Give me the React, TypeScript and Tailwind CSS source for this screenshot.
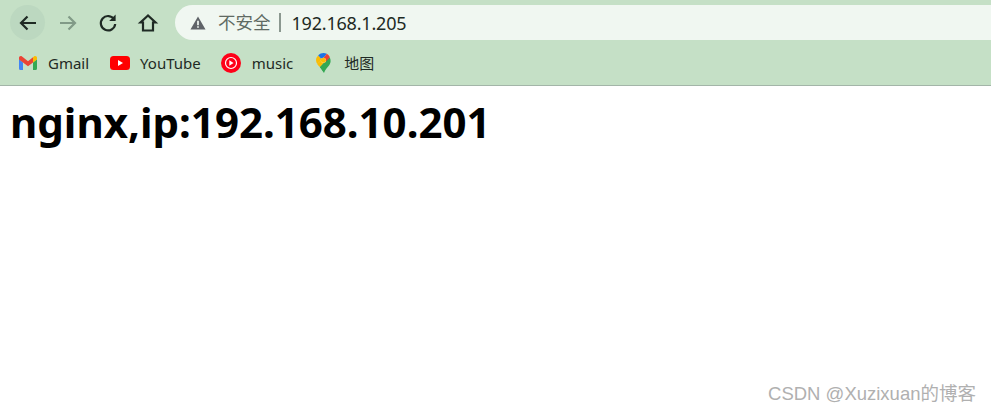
import React from "react";

const Nav = ({ d, color = "#1f2a24", bg = false }: { d: React.ReactNode; color?: string; bg?: boolean }) => (
  <div className={`flex h-[35px] w-[35px] shrink-0 items-center justify-center rounded-full ${bg ? "bg-[#bcd8c0]" : ""}`}>
    <svg width="24" height="24" viewBox="0 0 24 24" fill="none" stroke={color} strokeWidth="2.200">{d}</svg>
  </div>
);

export default function App() {
  return (
    <div className="relative h-[413px] w-[991px] overflow-hidden bg-white font-['Noto_Sans','Noto_Sans_CJK_SC',sans-serif]">
      <div className="flex h-[86px] flex-col border-b border-[#a3b5a8] bg-[#c5e0c6]">
        <div className="flex h-[45px] items-start pt-[5px] pl-[10px]">
          <div className="flex gap-[5px]">
            <Nav bg d={<path d="M20 12H5M11.500 5.500 5 12l6.500 6.500" />} />
            <Nav color="#819a87" d={<path d="M4 12h15M12.500 5.500 19 12l-6.500 6.500" />} />
            <Nav d={<><path d="M18.200 8.500A7.200 7.200 0 1 0 19.200 13" /><path d="M19.600 3.500v6.400h-6.400z" fill="#1f2a24" stroke="none" /></>} />
            <Nav d={<path d="M12 4.500 4.500 11.500H7V19.500H17V11.500H19.500Z" strokeLinejoin="miter" />} />
          </div>
          <div className="ml-[10px] flex h-[35px] flex-1 items-center rounded-l-full bg-[#f0f7f1] pl-[15px]">
            <svg width="16" height="14" viewBox="0 0 14 13" className="shrink-0">
              <path fillRule="evenodd" d="M7 0.500 14 12.500H0ZM6.200 4.500V8.500H7.800V4.500ZM6.200 9.500V11H7.800V9.500Z" fill="#5f6368" />
            </svg>
            <span className="ml-[12px] text-[17.500px] leading-none text-[#5f6a63]">不安全</span>
            <span className="ml-[8px] h-[19px] w-[2px] bg-[#8b9890]" />
            <span className="ml-[11px] text-[18px] leading-none tracking-[-0.2px] text-[#1e2a24] font-['Noto_Sans',sans-serif]">192.168.1.205</span>
          </div>
        </div>
        <div className="flex flex-1 items-center pb-[4px] text-[15px] leading-none text-[#1f2a24]">
          <div className="ml-[19px] flex items-center gap-[11px]">
            <svg width="18" height="14" viewBox="0 0 18 14">
              <path d="M0 3v9.500A1.500 1.500 0 0 0 1.500 14H4V6.500z" fill="#4285f4" />
              <path d="M14 6.500V14h2.500a1.500 1.500 0 0 0 1.500-1.500V3z" fill="#34a853" />
              <path d="M0 1.800C0 .3 1.800-.5 3 .5L4 1.300V6.500L0 3.500z" fill="#ea4335" />
              <path d="M4 1.300 9 5.200l5-3.900v5.200L9 10.300 4 6.500z" fill="#ea4335" />
              <path d="M14 1.300 15 .5c1.200-1 3-.2 3 1.300v1.700L14 6.500z" fill="#fbbc04" />
            </svg>
            <span>Gmail</span>
          </div>
          <div className="ml-[21px] flex items-center gap-[10px]">
            <svg width="20" height="14" viewBox="0 0 20 14">
              <rect width="20" height="14" rx="3.500" fill="#ff0000" />
              <path d="M8 4v6l5-3z" fill="#fff" />
            </svg>
            <span>YouTube</span>
          </div>
          <div className="ml-[20px] flex items-center gap-[11px]">
            <svg width="20" height="20" viewBox="0 0 20 20">
              <circle cx="10" cy="10" r="10" fill="#ff0018" />
              <circle cx="10" cy="10" r="5.500" fill="none" stroke="#fff" strokeWidth="1.200" />
              <path d="M8.300 7.300v5.400l4.200-2.700z" fill="#fff" />
            </svg>
            <span>music</span>
          </div>
          <div className="ml-[23px] flex items-center gap-[13px]">
            <svg width="15" height="20" viewBox="0 0 15 20">
              <path d="M3.800 14 11.500 5.600 13.800 4.500c1.500 3.500.7 5.600-.8 8-1.500 2.200-4 4-5 7.500z" fill="#34a853" />
              <path d="M7.500 19.500C6.600 17 5 15.300 3.800 14L7 11.500z" fill="#34a853" />
              <path d="M2.200 2.200A7.400 7.400 0 0 0 1.200 11L6 6.700z" fill="#fbbc04" />
              <path d="M1.200 11c.7 1.100 1.500 2 2.600 3l5-5.300L6 6.700z" fill="#fbbc04" />
              <path d="M2.200 2.200A7.500 7.500 0 0 1 7.500 0c1.100 0 2.300.3 3.300.8L6 6.700z" fill="#1a73e8" />
              <path d="M10.800.8c1.400.7 2.400 2.100 3 3.700L8.700 9.800 6 6.700z" fill="#ea4335" />
              <circle cx="7.400" cy="7.300" r="2.500" fill="#fff" />
              <circle cx="7.400" cy="7.300" r="2.500" fill="#fbbc04" />
            </svg>
            <span>地图</span>
          </div>
        </div>
      </div>
      <h1 className="mt-[9px] ml-[10px] text-[42px] leading-[54px] font-bold text-black">nginx,ip:192.168.10.201</h1>
      <div className="absolute top-[381px] right-[15px] text-[18.500px] leading-[26px] text-[#b0b0b0] font-['Liberation_Sans','Noto_Sans_CJK_SC',sans-serif]">CSDN @Xuzixuan的博客</div>
    </div>
  );
}
